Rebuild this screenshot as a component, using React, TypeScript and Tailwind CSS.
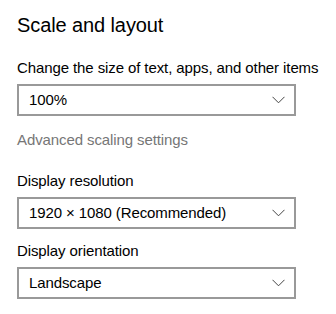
import React from 'react';

function Chevron() {
  return (
    <svg width="13" height="8" viewBox="0 0 13 8" className="shrink-0">
      <path d="M0.5 0.8 L6.5 6.8 L12.5 0.8" fill="none" stroke="#444" strokeWidth="1" />
    </svg>
  );
}

function Select({ value }: { value: string }) {
  return (
    <div className="w-[279px] h-[32px] border-2 border-[#999999] flex items-center justify-between pl-[10px] pr-[9px] text-[15px] text-black">
      <span>{value}</span>
      <Chevron />
    </div>
  );
}

export default function App() {
  return (
    <div
      className="w-[336px] h-[314px] bg-white text-black px-[17px] pt-[11px] whitespace-nowrap tracking-[-0.1px]"
      style={{ fontFamily: '"Liberation Sans", Arial, sans-serif' }}
    >
      <h1 className="text-[20px] leading-[28px] font-normal">Scale and layout</h1>

      <div className="mt-[19px] text-[15px] leading-[20px]">Change the size of text, apps, and other items</div>
      <div className="mt-[6px]">
        <Select value="100%" />
      </div>

      <div className="mt-[14px] text-[15px] leading-[20px] text-[#767676]">Advanced scaling settings</div>

      <div className="mt-[21px] text-[15px] leading-[20px]">Display resolution</div>
      <div className="mt-[6px]">
        <Select value="1920 × 1080 (Recommended)" />
      </div>

      <div className="mt-[12px] text-[15px] leading-[20px]">Display orientation</div>
      <div className="mt-[6px]">
        <Select value="Landscape" />
      </div>
    </div>
  );
}
